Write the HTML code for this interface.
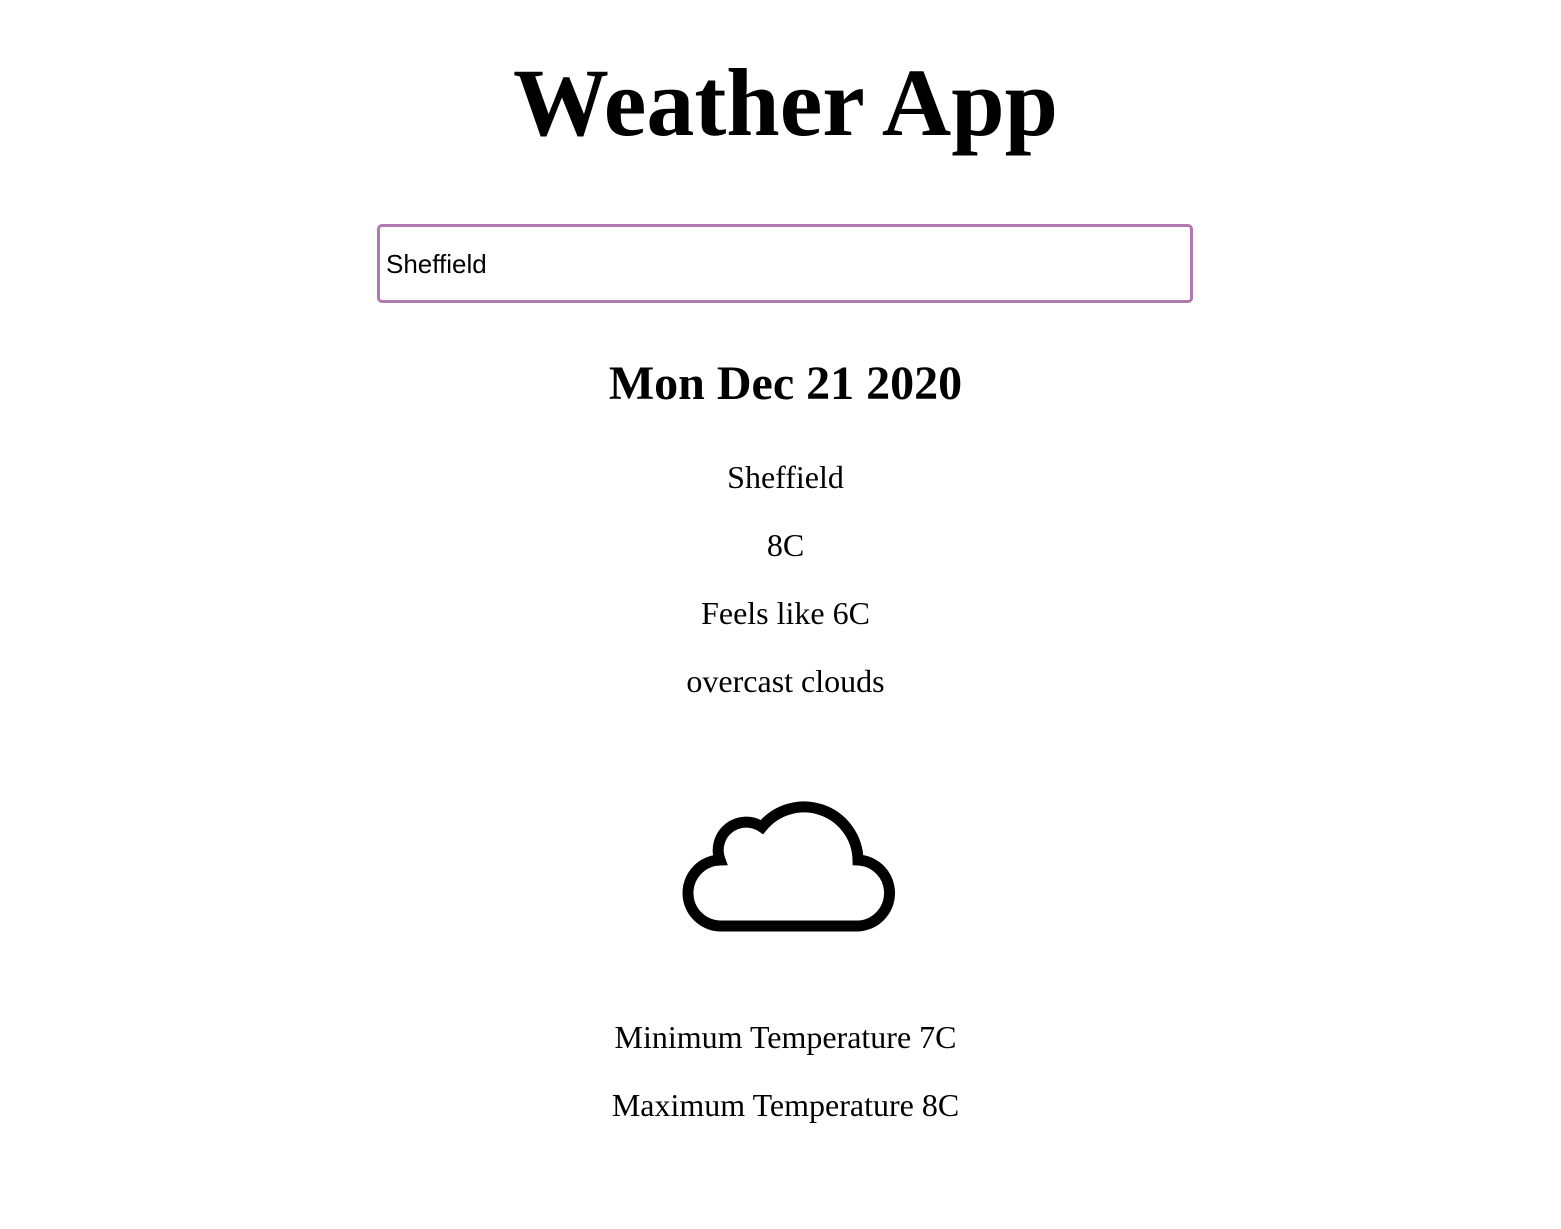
<!DOCTYPE html>
<html><head><style>
body{margin:0;background:#fff;font-family:"Liberation Serif",serif;color:#000;width:1561px;height:1229px;position:relative;overflow:hidden}
.a{position:absolute;left:5px;width:1561px;text-align:center;white-space:nowrap}
h1{margin:0;font-size:96px;font-weight:bold;line-height:1}
.in{position:absolute;left:377px;top:224px;width:810px;height:73px;border:3px solid #b07ab0;border-radius:5px;box-sizing:content-box}
.in span{position:absolute;left:6px;top:22px;font-family:"Liberation Sans",sans-serif;font-size:26px}
.p{font-size:32px;line-height:1}
</style></head><body>
<div class="a" style="top:55px"><h1>Weather App</h1></div>
<div class="in"><span>Sheffield</span></div>
<div class="a" style="top:360px;font-size:48px;font-weight:bold;line-height:1">Mon Dec 21 2020</div>
<div class="a p" style="top:461px">Sheffield</div>
<div class="a p" style="top:529px">8C</div>
<div class="a p" style="top:597px">Feels like 6C</div>
<div class="a p" style="top:665px">overcast clouds</div>
<svg style="position:absolute;left:0;top:0" width="1561" height="1229">
<path d="M722,926 H855 A33,33 0 0 0 858,860 A54,54 0 0 0 762,827 A28,28 0 0 0 720,860 A33,33 0 0 0 722,926 Z" fill="none" stroke="#000" stroke-width="11" stroke-linejoin="miter"/>
</svg>
<div class="a p" style="top:1021px">Minimum Temperature 7C</div>
<div class="a p" style="top:1089px">Maximum Temperature 8C</div>
</body></html>
